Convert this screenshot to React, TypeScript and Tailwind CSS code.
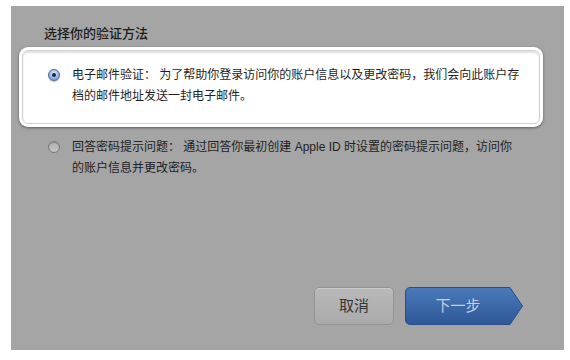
import React from 'react';

const FONT = { fontFamily: '"Liberation Sans", "Noto Sans CJK SC", sans-serif' };

const Radio: React.FC<{ checked?: boolean }> = ({ checked }) =>
  checked ? (
    <span className="mt-[4px] flex h-[12px] w-[12px] shrink-0 items-center justify-center rounded-full border border-[#4d6595] bg-[radial-gradient(circle_at_50%_35%,#e4eefc,#8fb1e4_60%,#5d86c8)] shadow-[0_1px_1px_rgba(0,0,0,0.25)]">
      <span className="h-[4px] w-[4px] rounded-full bg-[#1b2740]" />
    </span>
  ) : (
    <span className="mt-[4px] h-[12px] w-[12px] shrink-0 rounded-full border border-[#7a7a7a] bg-[linear-gradient(#b0b0b0,#c6c6c6)] shadow-[inset_0_1px_1px_rgba(0,0,0,0.2)]" />
  );

const App: React.FC = () => {
  return (
    <div className="h-[360px] w-[570px] bg-white pl-[11px] pt-[6px]" style={FONT}>
      <div className="flex h-[344px] w-[553px] flex-col bg-[#a5a5a5]">
        <h1 className="ml-[33px] mt-[19px] text-[13px] font-medium leading-[18px] text-[#1c1c1c]">选择你的验证方法</h1>

        {/* highlighted option */}
        <div className="ml-[8px] mt-[4px] h-[80px] w-[524px] rounded-[9px] bg-white p-[3px] shadow-[0_1px_3px_rgba(0,0,0,0.45)]">
          <div className="flex h-full gap-[12px] rounded-[6px] border border-[#d2d2d2] pl-[25px] pr-[12px] pt-[14px] shadow-[inset_0_2px_2px_rgba(0,0,0,0.12)]">
            <Radio checked />
            <p className="text-[12px] leading-[21px] text-[#1e1e1e]">
              电子邮件验证：&nbsp;为了帮助你登录访问你的账户信息以及更改密码，我们会向此账户存档的邮件地址发送一封电子邮件。
            </p>
          </div>
        </div>

        {/* dimmed option */}
        <div className="ml-[37px] mt-[10px] flex w-[476px] gap-[12px]">
          <Radio />
          <p className="text-[12px] leading-[21px] text-[#222]">
            回答密码提示问题：&nbsp;通过回答你最初创建 Apple ID 时设置的密码提示问题，访问你的账户信息并更改密码。
          </p>
        </div>

        <div className="mt-auto flex justify-end gap-[11px] pb-[25px] pr-[41px]">
          <button className="h-[38px] w-[80px] rounded-[5px] border border-[#949494] bg-[linear-gradient(#b9b9b9,#aaaaaa)] text-[15px] text-[#353535] shadow-[inset_0_1px_0_rgba(255,255,255,0.25)]">
            取消
          </button>
          <button className="relative h-[38px] w-[118px] text-[15px] text-[#c3cee2]">
            <svg className="absolute inset-0" width="118" height="38" viewBox="0 0 118 38">
              <defs>
                <linearGradient id="nx" x1="0" y1="0" x2="0" y2="1">
                  <stop offset="0" stopColor="#4b79b9" />
                  <stop offset="1" stopColor="#2e5898" />
                </linearGradient>
              </defs>
              <path d="M5 0.5 H105 L117.5 19 L105 37.5 H5 A4.5 4.5 0 0 1 0.5 33 V5 A4.5 4.5 0 0 1 5 0.5 Z" fill="url(#nx)" stroke="#2a4f88" />
            </svg>
            <span className="relative pr-[12px]">下一步</span>
          </button>
        </div>
      </div>
    </div>
  );
};

export default App;
